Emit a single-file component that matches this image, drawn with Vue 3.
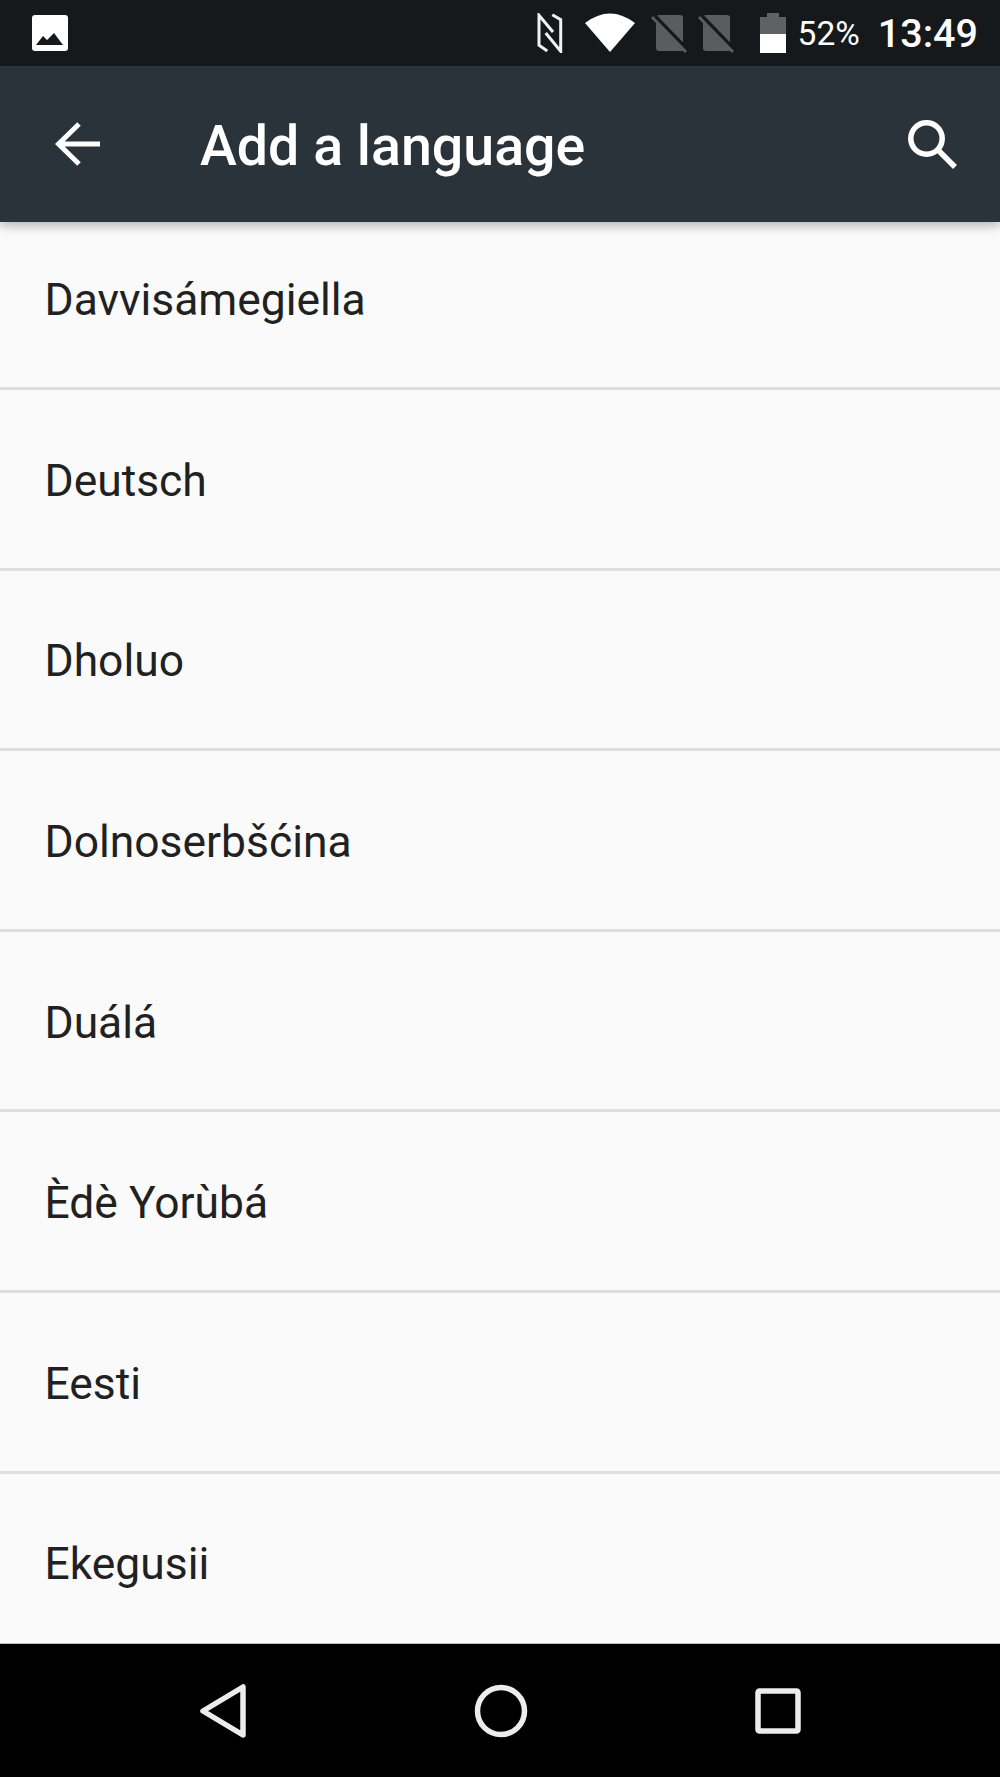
<script setup>
const languages = ['Davvisámegiella', 'Deutsch', 'Dholuo', 'Dolnoserbšćina', 'Duálá', 'Èdè Yorùbá', 'Eesti', 'Ekegusii']
</script>

<template>
  <div class="screen">
    <header class="status">
      <svg class="ic-image" width="36" height="36" viewBox="0 0 36 36">
        <rect width="36" height="36" rx="3" fill="#fff" />
        <path d="M4 30 L11 21 L15 25 L22 18 L31 30 Z" fill="#15191c" />
      </svg>
      <div class="status-right">
        <svg class="ic-nfc" width="26" height="40" viewBox="0 0 26 40" fill="none" stroke="#f2f2f2" stroke-width="3">
          <path d="M10.300 38 L2 32.300 V2.300 L16 19 M15.300 1.700 L23.700 6.700 V38.300 L8.700 20" />
        </svg>
        <svg class="ic-wifi" width="50" height="40" viewBox="0 0 50 40">
          <path d="M0 10 Q25 -9 50 10 L25 39 Z" fill="#fff" />
        </svg>
        <svg class="ic-sim" width="37" height="40" viewBox="0 0 37 40">
          <path d="M8 2 H29 Q32 2 32 5 V37 Q32 38 31 38 H8 Q5 38 5 35 V5 Q5 2 8 2 Z" fill="#5a5c5e" />
          <path d="M3 3 L37 38" stroke="#15191c" stroke-width="5" />
          <path d="M1 4 L35 39" stroke="#5a5c5e" stroke-width="2.800" />
        </svg>
        <svg class="ic-sim second" width="37" height="40" viewBox="0 0 37 40">
          <path d="M8 2 H29 Q32 2 32 5 V37 Q32 38 31 38 H8 Q5 38 5 35 V5 Q5 2 8 2 Z" fill="#5a5c5e" />
          <path d="M3 3 L37 38" stroke="#15191c" stroke-width="5" />
          <path d="M1 4 L35 39" stroke="#5a5c5e" stroke-width="2.800" />
        </svg>
        <svg class="ic-battery" width="26" height="40" viewBox="0 0 26 40">
          <path d="M0 4 H7 V0 H19 V4 H26 V21 H0 Z" fill="#5f6163" />
          <rect y="21" width="26" height="19" fill="#fff" />
        </svg>
        <span class="pct">52%</span>
        <span class="time">13:49</span>
      </div>
    </header>

    <div class="appbar">
      <svg class="ic-back" width="46" height="46" viewBox="0 0 46 46" fill="none" stroke="#fff" stroke-width="5">
        <path d="M45 23 H4 M24 3 L3.500 23 L24 43" />
      </svg>
      <h1 class="title">Add a language</h1>
      <svg class="ic-search" width="50" height="50" viewBox="0 0 50 50" fill="none" stroke="#fff" stroke-width="5.500">
        <circle cx="18.500" cy="18.500" r="15.700" />
        <path d="M29.500 29.500 L47 47" />
      </svg>
    </div>

    <main class="list">
      <div v-for="name in languages" :key="name" class="row">{{ name }}</div>
    </main>

    <nav class="navbar">
      <svg class="ic-nav" width="46" height="54" viewBox="0 0 46 54" fill="none" stroke="#ececec" stroke-width="5.500" stroke-linejoin="round">
        <path d="M43 3 V51 L3 27 Z" />
      </svg>
      <svg class="ic-nav" width="54" height="54" viewBox="0 0 54 54" fill="none" stroke="#ececec" stroke-width="5.500">
        <circle cx="27" cy="27" r="23.500" />
      </svg>
      <svg class="ic-nav" width="46" height="46" viewBox="0 0 46 46" fill="none" stroke="#ececec" stroke-width="5.500" stroke-linejoin="round">
        <rect x="3" y="3" width="40" height="40" rx="1.500" />
      </svg>
    </nav>
  </div>
</template>

<style>
html, body { margin: 0; background: #fafafa; }
</style>

<style scoped>
.screen {
  width: 1000px;
  height: 1777px;
  display: flex;
  flex-direction: column;
  overflow: hidden;
  background: #fafafa;
  font-family: Roboto, "Liberation Sans", sans-serif;
}
.status {
  height: 66px;
  flex: none;
  box-sizing: border-box;
  padding: 0 22px 0 32px;
  background: #15191c;
  display: flex;
  align-items: center;
  justify-content: space-between;
  position: relative;
  z-index: 2;
}
.status-right {
  display: flex;
  align-items: center;
  color: #fff;
}
.ic-wifi { margin-left: 22px; }
.ic-sim { margin-left: 16px; }
.ic-sim.second { margin-left: 10px; }
.ic-battery { margin-left: 25px; }
.pct { margin-left: 12px; font-size: 33.500px; font-weight: 400; }
.time { margin-left: 18px; font-size: 39.500px; font-weight: 500; }
.appbar {
  height: 156px;
  flex: none;
  box-sizing: border-box;
  padding: 4px 42px 0 55px;
  background: #2a3339;
  display: flex;
  align-items: center;
  position: relative;
  z-index: 1;
  box-shadow: 0 4px 10px rgba(0, 0, 0, 0.28);
}
.ic-back { margin-top: -4px; }
.ic-search { margin-top: -2px; }
.title {
  margin: 0 0 0 99px;
  flex: 1;
  font-size: 55.500px;
  font-weight: 500;
  color: #fff;
}
.list {
  flex: 1;
  min-height: 0;
  overflow: hidden;
  margin-top: -12.500px;
}
.row {
  height: 180.600px;
  box-sizing: border-box;
  border-bottom: 3px solid #dedede;
  padding: 4px 0 0 44.500px;
  display: flex;
  align-items: center;
  font-size: 44.400px;
  color: #212121;
}
.navbar {
  height: 134px;
  flex: none;
  box-sizing: border-box;
  border-top: 1px solid #bdbdbd;
  background: #000;
  display: flex;
  align-items: center;
  justify-content: space-between;
  padding: 0 199px 0 200px;
}
</style>
